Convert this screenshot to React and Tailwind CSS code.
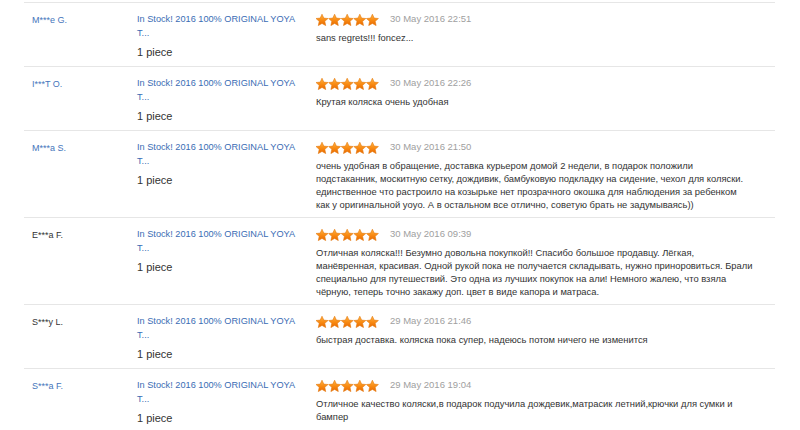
import React from 'react';

const reviews = [
  {
    name: 'M***e G.',
    link: true,
    date: '30 May 2016 22:51',
    lines: ['sans regrets!!! foncez...'],
  },
  {
    name: 'I***T O.',
    link: true,
    date: '30 May 2016 22:26',
    lines: ['Крутая коляска очень удобная'],
  },
  {
    name: 'M***a S.',
    link: true,
    date: '30 May 2016 21:50',
    lines: [
      'очень удобная в обращение, доставка курьером домой 2 недели, в подарок положили',
      'подстаканник, москитную сетку, дождивик, бамбуковую подкладку на сидение, чехол для коляски.',
      'единственное что растроило на козырьке нет прозрачного окошка для наблюдения за ребенком',
      'как у оригинальной yoyo. А в остальном все отлично, советую брать не задумываясь))',
    ],
  },
  {
    name: 'E***a F.',
    link: false,
    date: '30 May 2016 09:39',
    lines: [
      'Отличная коляска!!! Безумно довольна покупкой!! Спасибо большое продавцу. Лёгкая,',
      'манёвренная, красивая. Одной рукой пока не получается складывать, нужно приноровиться. Брали',
      'специально для путешествий. Это одна из лучших покупок на али! Немного жалею, что взяла',
      'чёрную, теперь точно закажу доп. цвет в виде капора и матраса.',
    ],
  },
  {
    name: 'S***y L.',
    link: false,
    date: '29 May 2016 21:46',
    lines: ['быстрая доставка. коляска пока супер, надеюсь потом ничего не изменится'],
  },
  {
    name: 'S***a F.',
    link: true,
    date: '29 May 2016 19:04',
    lines: [
      'Отличное качество коляски,в подарок подучила дождевик,матрасик летний,крючки для сумки и',
      'бампер',
    ],
  },
];

const STAR = 'M6 0.2 L7.8 4.1 L12 4.5 L8.8 7.3 L9.7 11.6 L6 9.4 L2.3 11.6 L3.2 7.3 L0 4.5 L4.2 4.1 Z';

const Stars = () => (
  <svg width="63" height="12" viewBox="0 0 63 12" className="block">
    <defs>
      <linearGradient id="starFill" x1="0" y1="0" x2="0" y2="1">
        <stop offset="0" stopColor="#ffb445" />
        <stop offset="0.5" stopColor="#f98c14" />
        <stop offset="1" stopColor="#e86800" />
      </linearGradient>
    </defs>
    {[0, 1, 2, 3, 4].map((i) => (
      <path
        key={i}
        d={STAR}
        transform={`translate(${i * 12.6} 0)`}
        fill="url(#starFill)"
        stroke="#e47a10"
        strokeWidth="0.6"
        strokeLinejoin="round"
      />
    ))}
  </svg>
);

const ReviewRow = ({ review }) => (
  <div className="flex border-t border-[#e6e6e6] pt-[7px] pb-[6px]">
    {/* Buyer */}
    <div className="w-[113px] shrink-0 pl-2 pt-[3px]">
      <div
        className={`text-[9px] leading-[14px] ${
          review.link ? 'text-[#4575bb]' : 'text-[#333333]'
        }`}
      >
        {review.name}
      </div>
    </div>

    {/* Product */}
    <div className="w-[179px] shrink-0 pt-[2px]">
      <a className="block text-[9.2px] leading-[14px] text-[#3a6cb4] whitespace-nowrap">
        In Stock! 2016 100% ORIGINAL YOYA
        <br />
        T...
      </a>
      <div className="mt-[4px] text-[11px] leading-[16px] text-[#333333]">1 piece</div>
    </div>

    {/* Feedback */}
    <div className="flex-1 pt-[3px]">
      <div className="flex h-[13px] items-center">
        <Stars />
        <span className="ml-[11px] text-[9.5px] text-[#a0a0a0]">{review.date}</span>
      </div>
      <p className="mt-[5px] text-[9.4px] leading-[13px] text-[#333333] whitespace-nowrap">
        {review.lines.map((line, i) => (
          <React.Fragment key={i}>
            {i > 0 && <br />}
            {line}
          </React.Fragment>
        ))}
      </p>
    </div>
  </div>
);

export default function App() {
  return (
    <div className="h-[430px] w-[800px] overflow-hidden bg-white font-['Liberation_Sans',Arial,sans-serif]">
      <div className="ml-[24px] w-[751px] pt-[2px]">
        {reviews.map((r) => (
          <ReviewRow key={r.name + r.date} review={r} />
        ))}
      </div>
    </div>
  );
}
